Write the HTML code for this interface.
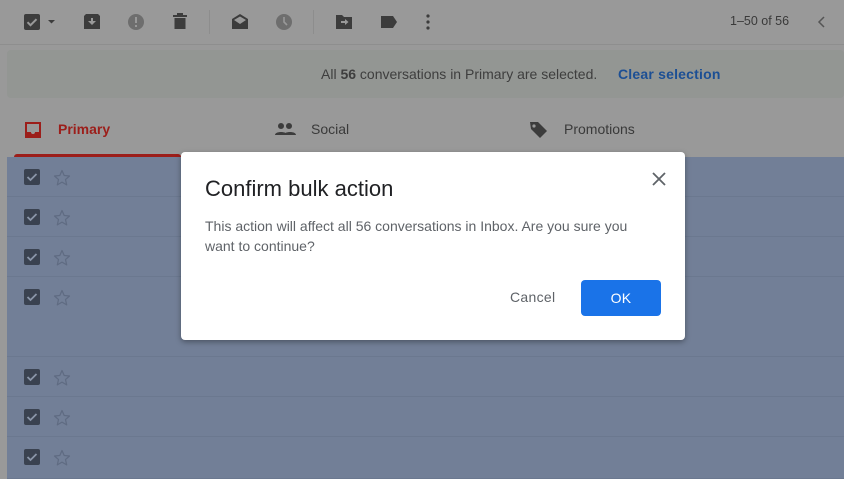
<!DOCTYPE html>
<html><head><meta charset="utf-8"><style>
*{margin:0;padding:0;box-sizing:border-box}
body{width:844px;height:479px;overflow:hidden;background:#999;font-family:"Liberation Sans",Arial,sans-serif;position:relative}
.ab{position:absolute}
.ic{position:absolute;fill:#3c3c3c}
.sep{position:absolute;width:1px;height:24px;top:10px;background:#8d8d8d}
.row{position:absolute;left:7px;width:837px;background:#727f97;border-bottom:1px solid #6b788f}
.cb{position:absolute;left:17px;width:16px;height:16px;background:#3a4250;border-radius:2px}
.cb svg{position:absolute;left:1px;top:1px}
.st{position:absolute;left:46px;top:12px}
</style></head><body>
<!-- toolbar -->
<div class="ab" style="left:0;top:0;width:844px;height:45px;border-bottom:1px solid #8e8e8e"></div>
<div class="ab" style="left:24px;top:14px;width:16px;height:16px;background:#3c3c3c;border-radius:2px"><svg width="16" height="16"><path d="M3.5 8.2l3 3 6-6" stroke="#999" stroke-width="2" fill="none"/></svg></div>
<svg class="ic" style="left:47px;top:19px" width="10" height="6"><path d="M1 1h7l-3.5 3.5z"/></svg>
<svg class="ic" style="left:83px;top:13px" width="18" height="18"><path d="M1 3l2-2h12l2 2v13H1z M5 8h3V5h2v3h3l-4 4z" fill-rule="evenodd"/></svg>
<svg class="ic" style="left:127px;top:13px" width="18" height="18"><circle cx="9" cy="9" r="8" fill="#6e6e6e"/><rect x="8" y="4" width="2" height="6" fill="#999"/><rect x="8" y="12" width="2" height="2" fill="#999"/></svg>
<svg class="ic" style="left:172px;top:12px" width="16" height="18"><path d="M1 3h14v2H1z M5 1h6v2H5z M2.5 6h11v11h-11z"/></svg>
<div class="sep" style="left:209px"></div>
<svg class="ic" style="left:231px;top:13px" width="18" height="18"><path d="M9 1l8 5v10H1V6z M3 7l6 4 6-4-6-3.5z" fill-rule="evenodd"/></svg>
<svg class="ic" style="left:275px;top:13px" width="18" height="18"><circle cx="9" cy="9" r="8" fill="#6e6e6e"/><path d="M9 4v5l3 3" stroke="#999" stroke-width="1.6" fill="none"/></svg>
<div class="sep" style="left:313px"></div>
<svg class="ic" style="left:335px;top:14px" width="18" height="16"><path d="M1 1h6l2 2h8v12H1z M6 7h4V5l3.5 3-3.5 3V9H6z" fill-rule="evenodd"/></svg>
<svg class="ic" style="left:380px;top:15px" width="18" height="14"><path d="M1 1h12l4 6-4 6H1z"/></svg>
<svg class="ic" style="left:425px;top:14px" width="6" height="16"><circle cx="3" cy="2" r="1.6"/><circle cx="3" cy="8" r="1.6"/><circle cx="3" cy="14" r="1.6"/></svg>
<div class="ab" style="left:730px;top:14px;font-size:12.5px;color:#3a3a3a">1–50 of 56</div>
<svg class="ab" style="left:817px;top:15px" width="10" height="14"><path d="M7 2L2 7l5 5" stroke="#555" stroke-width="1.5" fill="none"/></svg>
<!-- banner -->
<div class="ab" style="left:7px;top:50px;width:837px;height:48px;background:#939693;border-radius:4px"></div>
<div class="ab" style="left:321px;top:66px;font-size:14px;color:#3e3e3e">All <b>56</b> conversations in Primary are selected.</div>
<div class="ab" style="left:618px;top:66px;font-size:14px;color:#1c4f94;font-weight:bold;letter-spacing:.2px">Clear selection</div>
<!-- tabs -->
<svg class="ab" style="left:24px;top:121px" width="18" height="18"><path d="M1 1h16v16H1z M3 3v8h4a2 2 0 0 0 4 0h4V3z" fill="#9c1e1a" fill-rule="evenodd"/></svg>
<div class="ab" style="left:58px;top:121px;font-size:14px;color:#9c1e1a;font-weight:bold">Primary</div>
<div class="ab" style="left:14px;top:154px;width:167px;height:4px;background:#9c1e1a;border-radius:3px 3px 0 0"></div>
<svg class="ab" style="left:275px;top:122px" width="21" height="14"><circle cx="6" cy="4" r="3" fill="#3c3c3c"/><circle cx="14" cy="4" r="3" fill="#3c3c3c"/><path d="M0 13c0-4 12-4 12 0z M9 13c0-4 12-4 12 0z" fill="#3c3c3c"/></svg>
<div class="ab" style="left:311px;top:121px;font-size:14px;color:#3a3a3a">Social</div>
<svg class="ab" style="left:529px;top:121px" width="19" height="18"><path d="M1 1h8l9 9-7 7-9-9z" fill="#3c3c3c"/><circle cx="5" cy="5" r="1.6" fill="#999"/></svg>
<div class="ab" style="left:564px;top:121px;font-size:14px;color:#3a3a3a">Promotions</div>
<!-- rows -->
<svg width="0" height="0" style="position:absolute"><defs><symbol id="s" viewBox="0 0 18 18"><path d="M9 1.5l2.2 5 5.3.5-4 3.6 1.2 5.3L9 13.1l-4.7 2.8 1.2-5.3-4-3.6 5.3-.5z" fill="none" stroke="#5f6b82" stroke-width="1.2" stroke-linejoin="round"/></symbol></defs></svg>
<div class="row" style="top:157px;height:40px"><div class="cb" style="top:12px"><svg width="14" height="14"><path d="M2.5 7l3 3 6-6" stroke="#8a95a8" stroke-width="1.8" fill="none"/></svg></div><svg class="st" width="18" height="18"><use href="#s"/></svg></div>
<div class="row" style="top:197px;height:40px"><div class="cb" style="top:12px"><svg width="14" height="14"><path d="M2.5 7l3 3 6-6" stroke="#8a95a8" stroke-width="1.8" fill="none"/></svg></div><svg class="st" width="18" height="18"><use href="#s"/></svg></div>
<div class="row" style="top:237px;height:40px"><div class="cb" style="top:12px"><svg width="14" height="14"><path d="M2.5 7l3 3 6-6" stroke="#8a95a8" stroke-width="1.8" fill="none"/></svg></div><svg class="st" width="18" height="18"><use href="#s"/></svg></div>
<div class="row" style="top:277px;height:80px"><div class="cb" style="top:12px"><svg width="14" height="14"><path d="M2.5 7l3 3 6-6" stroke="#8a95a8" stroke-width="1.8" fill="none"/></svg></div><svg class="st" width="18" height="18"><use href="#s"/></svg></div>
<div class="row" style="top:357px;height:40px"><div class="cb" style="top:12px"><svg width="14" height="14"><path d="M2.5 7l3 3 6-6" stroke="#8a95a8" stroke-width="1.8" fill="none"/></svg></div><svg class="st" width="18" height="18"><use href="#s"/></svg></div>
<div class="row" style="top:397px;height:40px"><div class="cb" style="top:12px"><svg width="14" height="14"><path d="M2.5 7l3 3 6-6" stroke="#8a95a8" stroke-width="1.8" fill="none"/></svg></div><svg class="st" width="18" height="18"><use href="#s"/></svg></div>
<div class="row" style="top:437px;height:42px"><div class="cb" style="top:12px"><svg width="14" height="14"><path d="M2.5 7l3 3 6-6" stroke="#8a95a8" stroke-width="1.8" fill="none"/></svg></div><svg class="st" width="18" height="18"><use href="#s"/></svg></div>
<!-- dialog -->
<div class="ab" style="left:181px;top:152px;width:504px;height:188px;background:#fff;border-radius:4px;box-shadow:0 2px 6px rgba(0,0,0,.35)">
<div class="ab" style="left:24px;top:24px;font-size:22px;color:#202124">Confirm bulk action</div>
<svg class="ab" style="left:471px;top:20px" width="14" height="14"><path d="M1 1l12 12M13 1L1 13" stroke="#5f6368" stroke-width="1.8"/></svg>
<div class="ab" style="left:24px;top:64px;width:442px;font-size:14px;line-height:20px;color:#5f6368">This action will affect all 56 conversations in Inbox. Are you sure you want to continue?</div>
<div class="ab" style="left:329px;top:137px;font-size:14px;color:#5f6368;letter-spacing:.3px">Cancel</div>
<div class="ab" style="left:400px;top:128px;width:80px;height:36px;background:#1a73e8;border-radius:4px;color:#fff;font-size:14px;text-align:center;line-height:36px;letter-spacing:.3px">OK</div>
</div>
</body></html>
